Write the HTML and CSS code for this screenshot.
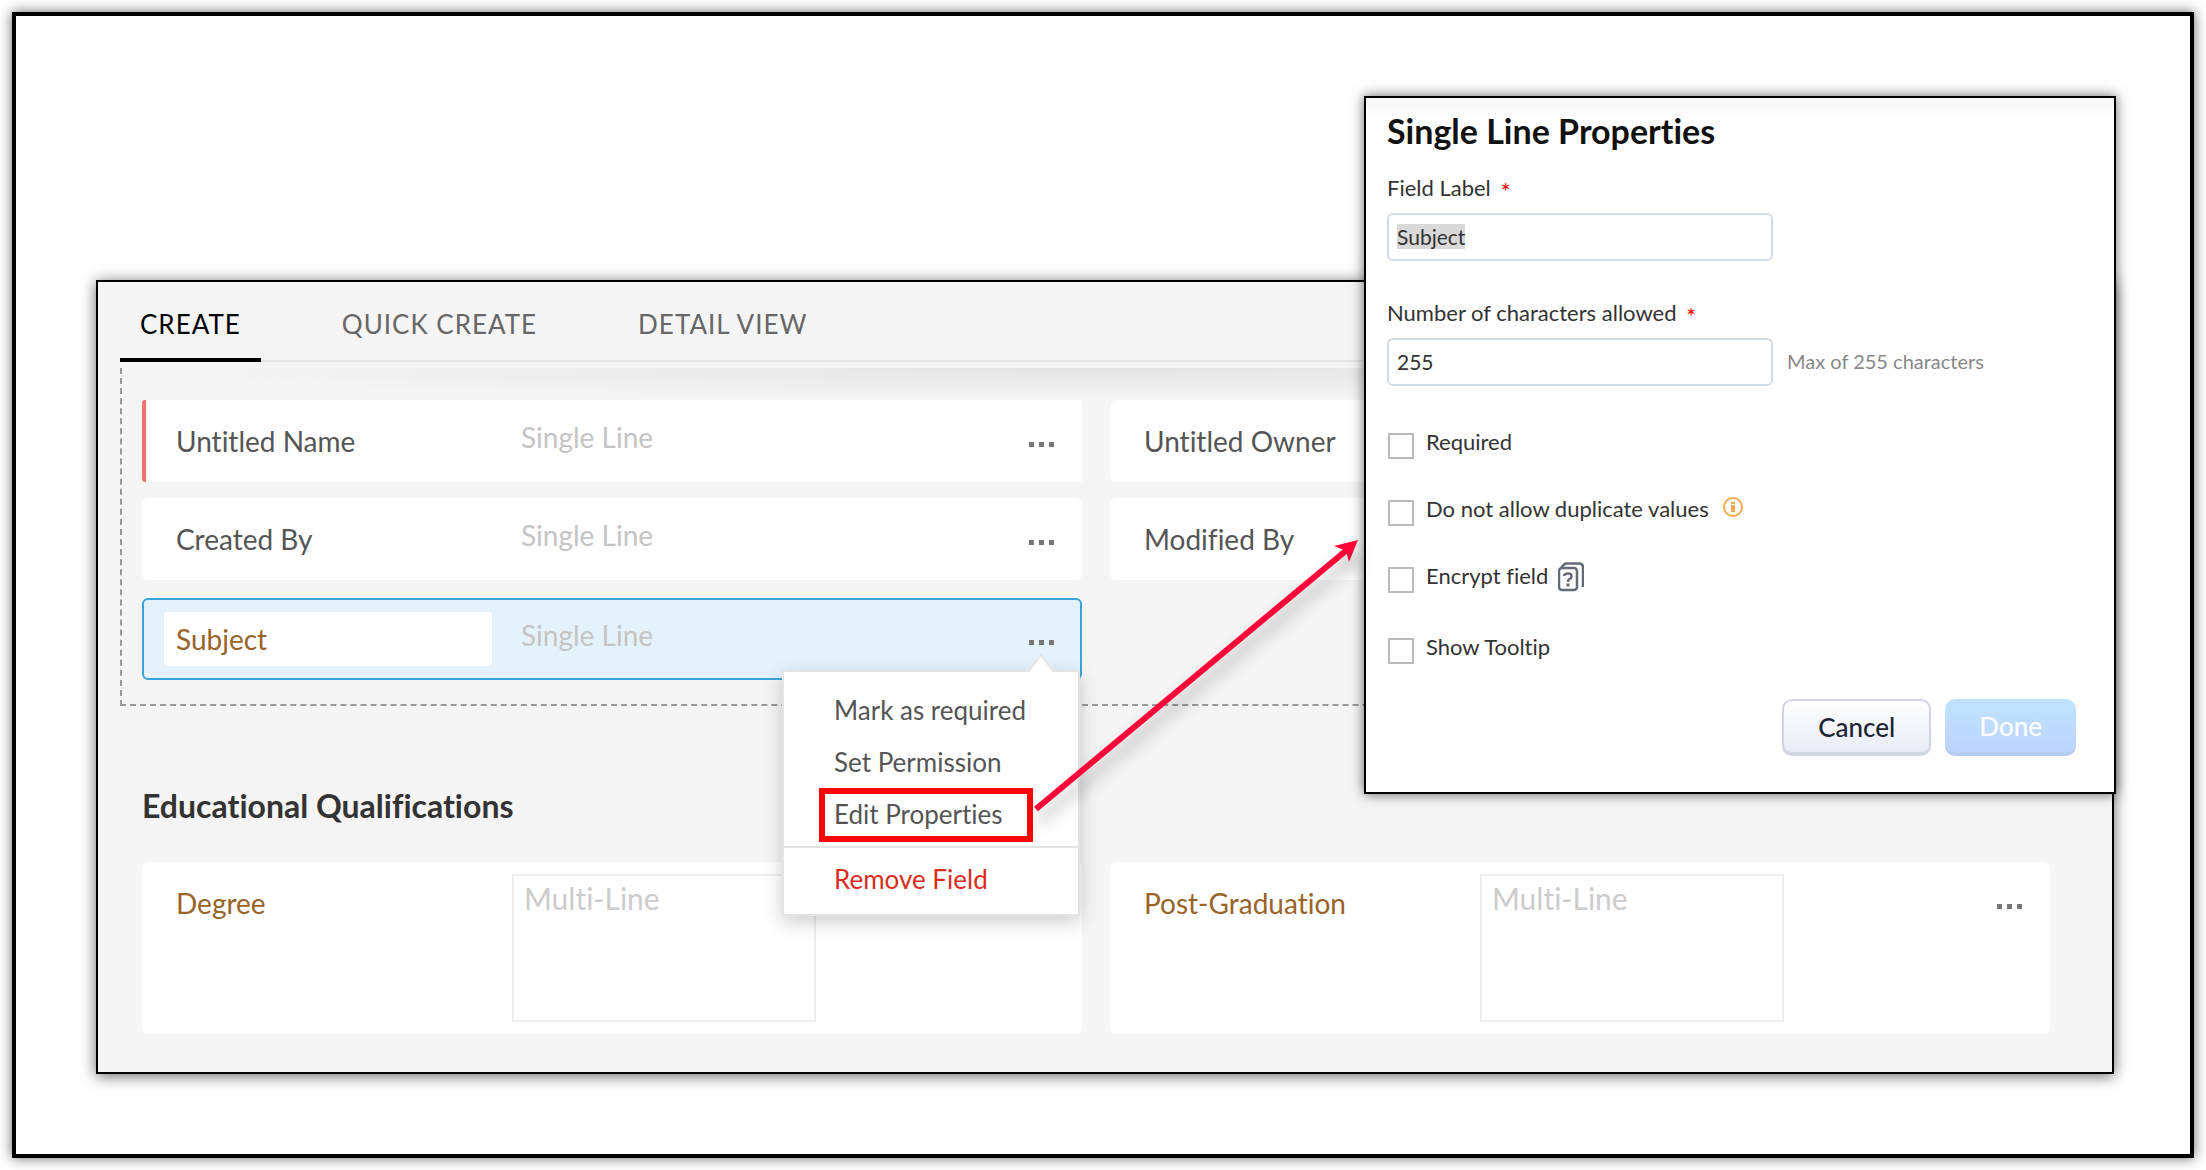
FILE: index.html
```html
<!DOCTYPE html>
<html lang="en">
<head>
    <meta charset="UTF-8">
    <meta name="viewport" content="width=device-width, initial-scale=1.0">
    <title>Layout Editor</title>
    <link rel="stylesheet" href="styles.css">
</head>
<body>
    <div class="frame">
        <div class="editor">
            <div class="tabs">
                <button class="tab active">CREATE</button>
                <button class="tab">QUICK CREATE</button>
                <button class="tab">DETAIL VIEW</button>
            </div>
            <div class="section dashed">
                <div class="field required">
                    <span class="field-name">Untitled Name</span>
                    <span class="field-type">Single Line</span>
                    <button class="more" aria-label="More"><i></i><i></i><i></i></button>
                </div>
                <div class="field">
                    <span class="field-name">Untitled Owner</span>
                </div>
                <div class="field">
                    <span class="field-name">Created By</span>
                    <span class="field-type">Single Line</span>
                    <button class="more" aria-label="More"><i></i><i></i><i></i></button>
                </div>
                <div class="field">
                    <span class="field-name">Modified By</span>
                </div>
                <div class="field selected">
                    <input class="name-input" type="text" value="Subject" aria-label="Field name">
                    <span class="field-type">Single Line</span>
                    <button class="more" aria-label="More"><i></i><i></i><i></i></button>
                    <div class="menu">
                        <svg class="caret" width="26" height="18" viewBox="0 0 26 18">
                            <path d="M0 18 L13 1 L26 18" fill="#fff" stroke="#e4e4e4" stroke-width="2"/>
                        </svg>
                        <button>Mark as required</button>
                        <button>Set Permission</button>
                        <button class="marked">Edit Properties</button>
                        <hr>
                        <button class="remove">Remove Field</button>
                    </div>
                </div>
            </div>
            <h2>Educational Qualifications</h2>
            <div class="section">
                <div class="field tall">
                    <label class="field-name custom" for="degree">Degree</label>
                    <textarea id="degree" placeholder="Multi-Line"></textarea>
                </div>
                <div class="field tall">
                    <label class="field-name custom" for="post-graduation">Post-Graduation</label>
                    <textarea id="post-graduation" placeholder="Multi-Line"></textarea>
                    <button class="more" aria-label="More"><i></i><i></i><i></i></button>
                </div>
            </div>
        </div>

        <form class="dialog">
            <h1>Single Line Properties</h1>
            <label for="field-label">Field Label <span class="star">*</span></label>
            <div class="input-row">
                <input type="text" id="field-label" value="Subject">
            </div>
            <label for="max-chars">Number of characters allowed <span class="star">*</span></label>
            <div class="input-row">
                <input type="text" id="max-chars" value="255">
                <span class="hint">Max of 255 characters</span>
            </div>
            <div class="checks">
                <div class="check">
                    <input type="checkbox" id="required">
                    <label for="required">Required</label>
                </div>
                <div class="check">
                    <input type="checkbox" id="no-duplicate">
                    <label for="no-duplicate">Do not allow duplicate values</label>
                    <svg class="info" width="20" height="20" viewBox="0 0 20 20">
                        <circle cx="10" cy="10" r="9" fill="none" stroke="#f7a94b" stroke-width="2"/>
                        <path d="M8 5h4v2h-4z M8 8h4v7h-4z" fill="#f7a94b"/>
                    </svg>
                </div>
                <div class="check">
                    <input type="checkbox" id="encrypt">
                    <label for="encrypt">Encrypt field</label>
                    <svg class="help" width="26" height="30" viewBox="0 0 26 30" fill="none" stroke="#646a78" stroke-width="2">
                        <rect x="1" y="6" width="18" height="22" rx="3" stroke-width="2.500"/>
                        <path d="M3 6 L6 2.500 Q7 1.500 9 1.500 H21 Q25 1.500 25 5.500 V25" stroke-width="2.500"/>
                        <path d="M6 14 Q6.500 11.500 10 11.500 Q13.500 11.500 13.500 14.200 Q13.500 16 11.500 17 Q10 17.800 10 20" stroke-width="2.500"/>
                        <path d="M10 21.500v3" stroke-width="3"/>
                    </svg>
                </div>
                <div class="check last">
                    <input type="checkbox" id="tooltip">
                    <label for="tooltip">Show Tooltip</label>
                </div>
            </div>
            <div class="actions">
                <button type="button" class="cancel">Cancel</button>
                <button type="button" class="done">Done</button>
            </div>
        </form>

        <svg class="arrow" width="340" height="300" viewBox="0 0 340 300">
            <path d="M16 279 L328 19" stroke="#ff0338" stroke-width="6" fill="none"/>
            <path d="M338 10 L314 16 L326 21 L329 32 Z" fill="#ff0338"/>
        </svg>
    </div>
    <script>
        document.getElementById('field-label').select();
    </script>
</body>
</html>
```
FILE: styles.css
```css
* {
    box-sizing: border-box;
}
body {
    margin: 0;
    padding: 12px;
    background: #fff;
    font-family: Lato, sans-serif;
    font-variant-ligatures: no-common-ligatures;
    color: #555;
}
button, input, textarea {
    font-family: inherit;
    font-variant-ligatures: inherit;
}
button {
    cursor: pointer;
}
.frame {
    position: relative;
    min-height: calc(100vh - 24px);
    border: 4px solid #000;
    padding: 264px 76px 80px 80px;
    box-shadow: 0 0 12px rgba(0, 0, 0, 0.6);
}
.editor {
    border: 2px solid #000;
    background: #f5f5f5;
    padding: 0 22px 38px;
    box-shadow: 0 2px 14px rgba(0, 0, 0, 0.6);
}

/* Tabs */
.tabs {
    display: flex;
    gap: 61px;
    height: 80px;
    border-bottom: 2px solid #e4e4e4;
}
.tab {
    height: 80px;
    padding: 8px 20px 0;
    border: none;
    border-bottom: 4px solid transparent;
    background: none;
    color: #666;
    font-size: 26px;
    letter-spacing: 1px;
}
.tab.active {
    color: #000;
    border-bottom-color: #000;
}

/* Field cards */
.section {
    display: grid;
    grid-template-columns: 1fr 1fr;
    gap: 16px 28px;
    padding: 0 40px 0 22px;
}
.section.dashed {
    margin: 6px 20px 0 0;
    padding: 32px 18px 24px 20px;
    border: 2px dashed #999;
    border-top: none;
    background: radial-gradient(ellipse 50% 32px at 50% 0, #e4e4e4, #f5f5f5) no-repeat;
}
.field {
    position: relative;
    display: flex;
    align-items: center;
    height: 82px;
    padding: 0 28px 0 34px;
    background: #fff;
    border-radius: 6px;
}
.field.required {
    border-left: 4px solid #f37370;
    border-radius: 3px;
    padding-left: 30px;
}
.field.selected {
    margin-top: 2px;
    border: 2px solid #3aa3dc;
    background: #e6f2fb;
    padding: 0 26px 0 20px;
}
.field-name {
    width: 345px;
    font-size: 28px;
}
.field-name.custom {
    color: #996329;
}
.field-type {
    flex: 1;
    padding-bottom: 8px;
    font-size: 28px;
    color: #c4c4c4;
}
.name-input {
    width: 328px;
    height: 54px;
    margin-right: 29px;
    padding: 0 12px;
    border: none;
    border-radius: 4px;
    background: #fff;
    color: #996329;
    font-size: 28px;
}
.more {
    display: flex;
    gap: 5px;
    margin-left: auto;
    padding: 6px 0 0;
    border: none;
    background: none;
}
.more i {
    width: 5px;
    height: 5px;
    background: #777;
}
.field.tall {
    align-items: flex-start;
    height: 172px;
    padding-top: 12px;
}
.tall .field-name {
    width: 336px;
    padding-top: 12px;
}
.tall .more {
    padding-top: 30px;
}
.field textarea {
    width: 304px;
    height: 148px;
    padding: 4px 10px;
    border: 2px solid #eee;
    background: #fff;
    font-size: 30px;
    resize: none;
}
.field textarea::placeholder {
    color: #ccc;
}
h2 {
    margin: 79px 22px 35px;
    color: #333;
    font-size: 32px;
    line-height: 42px;
}

/* Context menu */
.menu {
    position: absolute;
    z-index: 2;
    top: 70px;
    right: 0;
    width: 298px;
    padding: 12px 0;
    border: 2px solid #e4e4e4;
    background: #fff;
    box-shadow: 0 6px 18px rgba(0, 0, 0, 0.2);
}
.caret {
    position: absolute;
    top: -18px;
    right: 24px;
}
.menu button {
    display: block;
    height: 52px;
    padding: 0 0 0 50px;
    border: none;
    background: none;
    color: #555;
    font-size: 26px;
    text-align: left;
}
.menu button.marked {
    height: 54px;
    margin-left: 35px;
    padding: 0 24px 2px 9px;
    border: 6px solid #f90606;
}
.menu hr {
    margin: 4px 0 8px;
    border: none;
    border-top: 2px solid #e4e4e4;
}
.menu button.remove {
    height: 46px;
    color: #d92d20;
}

/* Properties dialog */
.dialog {
    position: absolute;
    z-index: 3;
    top: 80px;
    right: 74px;
    width: 752px;
    padding: 12px 38px 36px 21px;
    border: 2px solid #000;
    background: linear-gradient(#f7f7f7, #fff 24px);
    box-shadow: 0 0 12px rgba(0, 0, 0, 0.6);
    color: #333;
    font-size: 22px;
}
.dialog h1 {
    margin: 0 0 22px;
    color: #111;
    font-size: 34px;
    line-height: 42px;
}
.dialog label {
    display: block;
    line-height: 28px;
}
.star {
    margin-left: 4px;
    color: #f00;
    font-size: 24px;
    line-height: 20px;
    vertical-align: -4px;
}
.input-row {
    display: flex;
    align-items: center;
    gap: 14px;
    margin: 11px 0 38px;
}
.input-row input {
    width: 386px;
    height: 48px;
    padding: 0 8px 2px;
    border: 2px solid #d3dce6;
    border-radius: 6px;
    outline: none;
    background: #fff;
    color: #333;
    font-size: 21px;
}
.input-row input::selection {
    background: #d9d9d9;
    color: #333;
}
.hint {
    padding-bottom: 2px;
    color: #888;
    font-size: 20px;
}
.checks {
    display: grid;
    gap: 41px;
    margin-top: 47px;
}
.check {
    display: flex;
    align-items: center;
    height: 26px;
}
.check.last {
    margin-top: 4px;
}
.check input {
    appearance: none;
    width: 26px;
    height: 26px;
    margin: 0 12px 0 1px;
    border: 2px solid #bbb;
    background: #fff;
}
.check label {
    padding-bottom: 8px;
}
.info {
    margin: 0 0 12px 14px;
}
.help {
    margin: 0 0 6px 10px;
}
.actions {
    display: flex;
    justify-content: flex-end;
    gap: 14px;
    margin-top: 35px;
}
.actions button {
    height: 57px;
    border-radius: 10px;
    font-size: 26px;
    font-weight: 500;
}
.cancel {
    padding: 0 34px;
    border: 2px solid #d3d6e2;
    border-bottom-width: 4px;
    background: linear-gradient(#fff, #e9ecf5);
    color: #1d2433;
}
.done {
    padding: 0 34px;
    border: none;
    border-bottom: 4px solid #b8cbf3;
    background: linear-gradient(#c0e3ff, #bcd5ff);
    color: #fff;
}

/* Callout arrow from the menu item to the dialog */
.arrow {
    position: absolute;
    z-index: 4;
    top: 514px;
    right: 830px;
    filter: drop-shadow(2px 12px 8px rgba(0, 0, 0, 0.3));
}
```
